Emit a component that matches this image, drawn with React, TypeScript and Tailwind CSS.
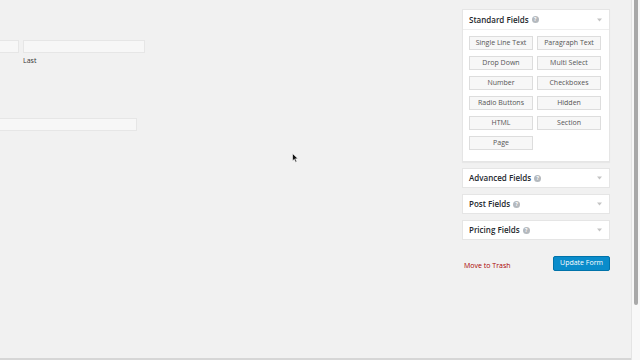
import React from 'react';

const Help: React.FC = () => (
  <span className="ml-[3px] inline-flex h-[7px] w-[7px] items-center justify-center rounded-full bg-[#b4b9be] text-[5px] font-bold leading-none text-white">
    ?
  </span>
);

const Caret: React.FC = () => (
  <svg className="h-[4px] w-[5px]" viewBox="0 0 5 4">
    <path d="M0 0.5 L5 0.5 L2.5 3.5 Z" fill="#c4c4c4" />
  </svg>
);

const PanelHeader: React.FC<{ title: string; divider?: boolean }> = ({ title, divider }) => (
  <div
    className={`flex items-center justify-between pl-[6px] pr-[7px] ${
      divider ? 'h-[20px] border-b border-[#eeeeee]' : 'h-[18px]'
    }`}
  >
    <span className="flex items-center text-[8px] font-semibold text-[#23282d]">
      {title}
      <Help />
    </span>
    <Caret />
  </div>
);

const fields = [
  'Single Line Text',
  'Paragraph Text',
  'Drop Down',
  'Multi Select',
  'Number',
  'Checkboxes',
  'Radio Buttons',
  'Hidden',
  'HTML',
  'Section',
  'Page',
];

export default function App() {
  return (
    <div
      className="relative flex h-[360px] w-[640px] overflow-hidden bg-[#f1f1f1]"
      style={{ fontFamily: '"Open Sans", "Noto Sans", sans-serif' }}
    >
      <div className="flex flex-1 flex-col border-b-2 border-[#d6d6d6]">
        <div className="flex flex-1">
          {/* form preview */}
          <div className="w-[462px] pt-[40px]">
            <div className="flex gap-[4px]">
              <div className="h-[13px] w-[19px] border border-l-0 border-[#e6e6e6] bg-[#f7f7f7]" />
              <div className="flex flex-col">
                <div className="h-[13px] w-[122px] border border-[#e6e6e6] bg-[#f7f7f7]" />
                <span className="mt-[3px] text-[7px] leading-[10px] text-[#333]">Last</span>
              </div>
            </div>
            <div className="mt-[52px] h-[13px] w-[137px] border border-l-0 border-[#e6e6e6] bg-[#f7f7f7]" />
          </div>

          {/* sidebar */}
          <div className="flex w-[148px] flex-col pt-[9px]">
            <div className="border border-[#e5e5e5] bg-white shadow-[0_1px_1px_rgba(0,0,0,0.04)]">
              <PanelHeader title="Standard Fields" divider />
              <div className="grid grid-cols-[64px_64px] gap-x-[4px] gap-y-[6px] pb-[11px] pl-[6px] pt-[6px]">
                {fields.map((f) => (
                  <div
                    key={f}
                    className="flex h-[14px] items-center justify-center border border-[#dddddd] bg-[#f7f7f7] text-[7px] text-[#555]"
                  >
                    {f}
                  </div>
                ))}
              </div>
            </div>
            {['Advanced Fields', 'Post Fields', 'Pricing Fields'].map((t) => (
              <div key={t} className="mt-[6px] border border-[#e5e5e5] bg-white">
                <PanelHeader title={t} />
              </div>
            ))}
            <div className="mt-[15px] flex items-center justify-between pl-[2px]">
              <span className="mt-[6px] text-[7px] text-[#a00]">Move to Trash</span>
              <div className="flex h-[15px] items-center rounded-[2px] border border-[#0073aa] bg-[#0a8ccb] px-[6px] text-[7px] text-white">
                Update Form
              </div>
            </div>
          </div>
        </div>
      </div>

      {/* scrollbar */}
      <div className="flex w-[9px] justify-center border-l border-[#e4e4e4] bg-[#f8f8f8] pb-[2px]">
        <div className="mt-0 h-[305px] w-[4px] rounded-b-[2px] bg-[#a9a9a9]" />
      </div>

      {/* mouse cursor */}
      <svg className="absolute left-[292px] top-[153px] h-[10px] w-[7px]" viewBox="0 0 7 10">
        <path d="M0.5 0.5 L0.5 8 L2.3 6.3 L3.6 9.3 L4.8 8.8 L3.5 5.8 L6 5.8 Z" fill="#111" stroke="#fff" strokeWidth="0.6" />
      </svg>
    </div>
  );
}
